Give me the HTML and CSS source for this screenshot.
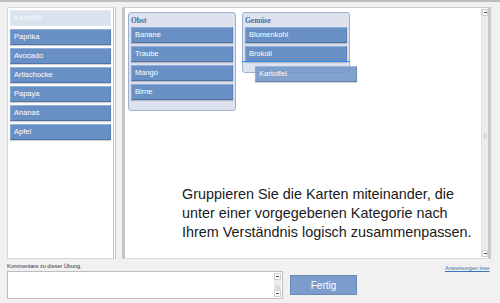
FILE: index.html
```html
<!DOCTYPE html>
<html lang="de">
<head>
<meta charset="utf-8">
<link rel="stylesheet" href="styles.css">
</head>
<body>
<div class="topline"></div>
<div class="main">
  <div class="pool">
    <div class="card placeholder">Kartoffel</div>
    <div class="card">Paprika</div>
    <div class="card">Avocado</div>
    <div class="card">Artischocke</div>
    <div class="card">Papaya</div>
    <div class="card">Ananas</div>
    <div class="card">Apfel</div>
  </div>
  <div class="board">
    <div class="board-inner">
      <div class="groups">
        <div class="group obst">
          <div class="group-title">Obst</div>
          <div class="card">Banane</div>
          <div class="card">Traube</div>
          <div class="card">Mango</div>
          <div class="card">Birne</div>
        </div>
        <div class="group gemuese">
          <div class="group-title">Gemüse</div>
          <div class="card">Blumenkohl</div>
          <div class="card">Brokoli</div>
          <div class="drop-line"></div>
          <div class="card dragging">Kartoffel</div>
        </div>
      </div>
      <p class="instructions">Gruppieren Sie die Karten miteinander, die<br>unter einer vorgegebenen Kategorie nach<br>Ihrem Verständnis logisch zusammenpassen.</p>
    </div>
    <div class="vscroll">
      <div class="arrow up"></div>
      <div class="track"><div class="thumb"></div></div>
      <div class="arrow down"></div>
    </div>
  </div>
</div>
<div class="footer">
  <div class="comments">
    <div class="comments-label">Kommentare zu dieser Übung.</div>
    <div class="textarea">
      <div class="ta-scroll">
        <div class="arrow up"></div>
        <div class="track"><div class="thumb"></div></div>
        <div class="arrow down"></div>
      </div>
    </div>
  </div>
  <button class="done">Fertig</button>
  <a class="help" href="#">Anweisungen lese</a>
</div>
</body>
</html>
```

FILE: styles.css
```css
* { box-sizing: border-box; }
html, body {
  margin: 0;
  padding: 0;
  width: 500px;
  height: 303px;
  overflow: hidden;
  background: #f1f1f1;
  font-family: "Liberation Sans", Arial, sans-serif;
}
.topline {
  height: 2px;
  background: #bdbdbd;
}
.main {
  display: flex;
  gap: 6px;
  padding: 5px 0 0 7px;
  height: 259px;
}
.pool {
  width: 109px;
  height: 252px;
  background: #fff;
  border: 1px solid #d6d6d6;
  border-right: 3px double #c8c8c8;
  padding: 2px 2px 0 2px;
  display: flex;
  flex-direction: column;
  gap: 3px;
}
.card {
  height: 16px;
  background: #6890c4;
  border-top: 1px solid #8fb0d9;
  border-left: 1px solid #86a6d2;
  border-bottom: 1px solid #4f74a6;
  border-right: 1px solid #5a7fb2;
  box-shadow: 0 1px 1px rgba(0,0,0,0.18);
  color: #fff;
  font-size: 7.5px;
  line-height: 14px;
  padding-left: 3px;
  white-space: nowrap;
}
.card.placeholder {
  background: #dae2ee;
  border-color: #e4eaf3;
  box-shadow: none;
  color: #f7f9fc;
}
.board {
  width: 369px;
  height: 252px;
  background: #fff;
  border-top: 1px solid #cfcfcf;
  border-left: 3px solid #c4c4c4;
  border-right: 3px solid #c9c9c9;
  border-bottom: 1px solid #d8d8d8;
  display: flex;
}
.board-inner {
  flex: 1;
  display: flex;
  flex-direction: column;
  padding: 4px 0 0 3px;
}
.groups {
  display: flex;
  gap: 6px;
  align-items: flex-start;
}
.group {
  width: 108px;
  background: #dde2ee;
  border: 1px solid #9cb0d2;
  border-radius: 3px;
  padding: 0 2px;
  display: flex;
  flex-direction: column;
  gap: 3px;
  position: relative;
}
.group .card { width: 102px; }
.group.obst { height: 99px; }
.group.gemuese { height: 61px; }
.group-title {
  font-family: "Liberation Serif", "Times New Roman", serif;
  font-weight: bold;
  font-size: 7.5px;
  color: #4a68a0;
  height: 11px;
  line-height: 11px;
  padding-top: 2px;
  margin-bottom: 0;
}
.drop-line {
  position: absolute;
  left: -1px;
  right: -1px;
  top: 48px;
  height: 1px;
  background: #2e8df0;
}
.card.dragging {
  position: absolute;
  left: 12px;
  top: 53px;
  width: 102px;
  opacity: 0.88;
  background: #7096c7;
}
.instructions {
  margin: auto 0 0 54px;
  padding-bottom: 16px;
  font-size: 14.4px;
  line-height: 19px;
  color: #1a1a1a;
}
.vscroll {
  width: 7px;
  display: flex;
  flex-direction: column;
  background: #f3f3f3;
  border-left: 1px solid #e0e0e0;
  margin: 1px 0 1px 0;
}
.arrow {
  height: 7px;
  background: #fafafa;
  border: 1px solid #d0d0d0;
  position: relative;
}
.arrow::after {
  content: "";
  position: absolute;
  left: 1px;
  top: 2px;
  width: 3px;
  height: 1px;
  background: #555;
}
.track {
  flex: 1;
  position: relative;
  background: #ececec;
}
.thumb {
  position: absolute;
  left: 1px;
  right: 1px;
  top: 50%;
  height: 6px;
  background: #dcdcdc;
}
.footer {
  position: relative;
  height: 42px;
}
.comments {
  position: absolute;
  left: 7px;
  top: 2px;
  width: 276px;
}
.comments-label {
  font-size: 5.5px;
  color: #333;
  height: 8px;
  line-height: 7px;
}
.textarea {
  height: 28px;
  background: #fff;
  border: 1px solid #bdbdbd;
  position: relative;
}
.ta-scroll {
  position: absolute;
  right: 1px;
  top: 1px;
  bottom: 1px;
  width: 7px;
  display: flex;
  flex-direction: column;
}
.done {
  position: absolute;
  left: 290px;
  top: 14px;
  width: 67px;
  height: 20px;
  background: #7b9ccd;
  border: 1px solid #6c89b5;
  color: #fff;
  font-family: "Liberation Sans", Arial, sans-serif;
  font-size: 10px;
  padding: 0;
}
.help {
  position: absolute;
  left: 445px;
  top: 4px;
  font-size: 5.5px;
  color: #3b73b9;
  text-decoration: underline;
}
```
